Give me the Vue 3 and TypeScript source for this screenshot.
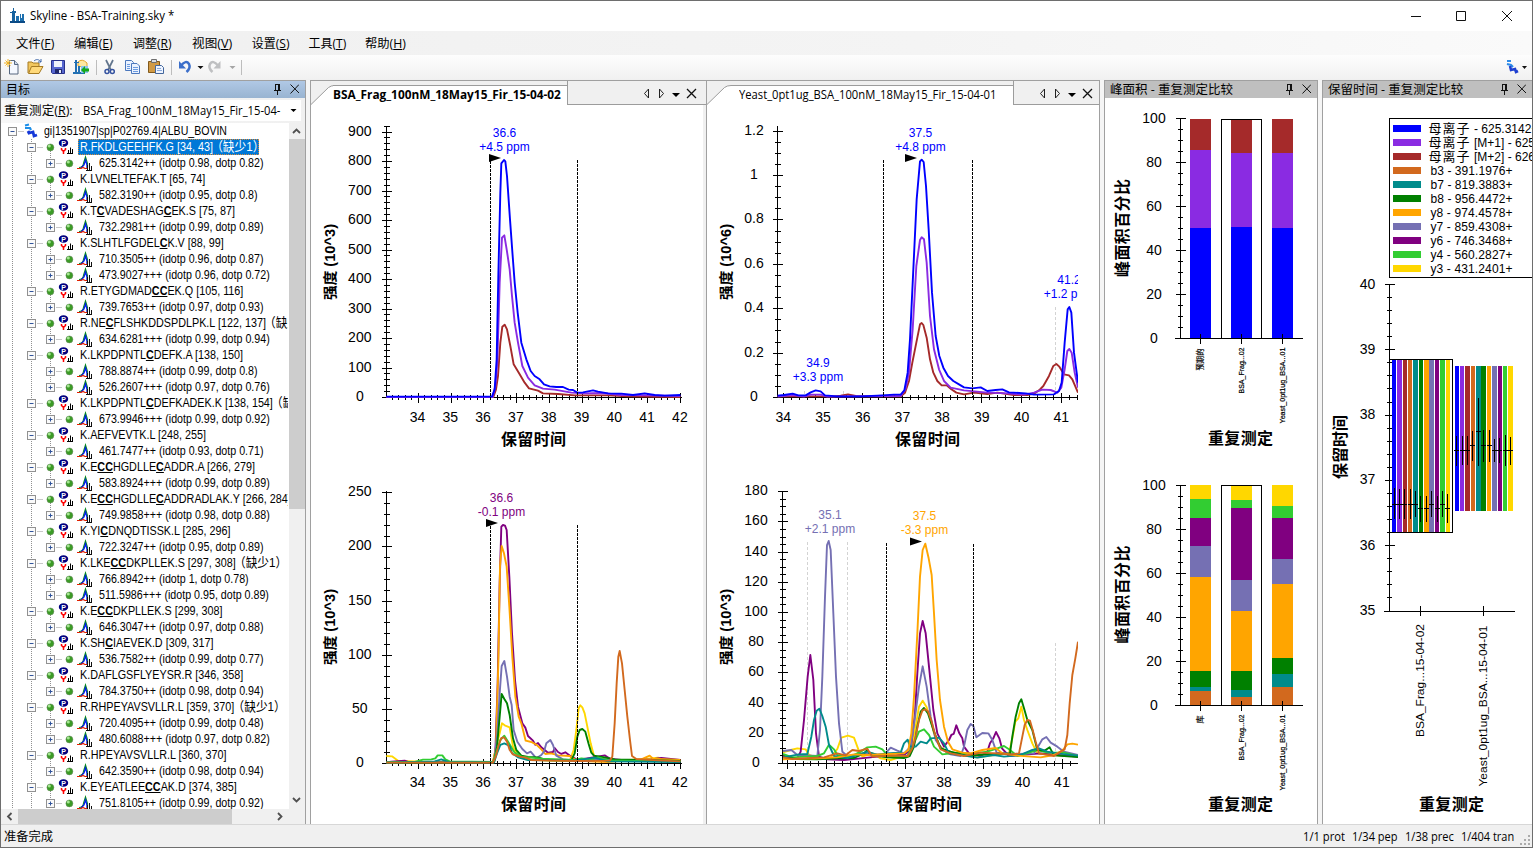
<script setup lang="ts">
type Span = [number, number]

interface TreeRow { level: 0 | 1 | 2; text: string; missed?: boolean; selected?: boolean }
interface Curve { color: string; d: string }
interface Note { x: number; y: number; color: string; top: string; bottom: string }
interface Plot {
  ox: number; oy: number
  axisX: number; axisTop: number; base: number
  yStep: number; yLabels: string[]; yLabelX: number; yMinor: number
  xFirst: number; xStep: number; xLabels: string[]; xEnd: number; labelShift: number
  unit: string; unitX: number; unitTop: number; titleX: number
  solid: number[][]; faint: number[][]
  arrow: Span; notes: Note[]; curves: Curve[]
}

/* Squeezes or stretches a run of text to a given width. */
const vFit = {
  mounted(el: HTMLElement, binding: { value: number }) {
    const natural = el.offsetWidth
    el.style.transform = `scaleX(${binding.value / natural})`
    el.style.marginRight = `${binding.value - natural}px`
  },
}

const C = {
  blue: '#0000ff', violet: '#8a2be2', brown: '#a52a2a', choc: '#d2691e', teal: '#008b8b',
  green: '#008000', orange: '#ffa500', slate: '#7570b3', purple: '#800080', lime: '#32cd32', gold: '#ffd700',
}
const palette = [C.blue, C.violet, C.brown, C.choc, C.teal, C.green, C.orange, C.slate, C.purple, C.lime, C.gold]

const menus = [
  { t: '文件', k: 'F', w: 38, gap: 20 }, { t: '编辑', k: 'E', w: 39, gap: 20 }, { t: '调整', k: 'R', w: 39, gap: 20 },
  { t: '视图', k: 'V', w: 40, gap: 20 }, { t: '设置', k: 'S', w: 38, gap: 19 }, { t: '工具', k: 'T', w: 38, gap: 19 },
  { t: '帮助', k: 'H', w: 41, gap: 0 },
]

const p = (text: string, missed = false, selected = false): TreeRow => ({ level: 1, text, missed, selected })
const c = (text: string): TreeRow => ({ level: 2, text })
const rows: TreeRow[] = [
  { level: 0, text: 'gi|1351907|sp|P02769.4|ALBU_BOVIN' },
  p('R.FKDLGEEHFK.G [34, 43]', true, true), c('625.3142++ (idotp 0.98, dotp 0.82)'),
  p('K.LVNELTEFAK.T [65, 74]'), c('582.3190++ (idotp 0.95, dotp 0.8)'),
  p('K.T*C*VADESHAG*C*EK.S [75, 87]'), c('732.2981++ (idotp 0.99, dotp 0.89)'),
  p('K.SLHTLFGDEL*C*K.V [88, 99]'), c('710.3505++ (idotp 0.96, dotp 0.87)'), c('473.9027+++ (idotp 0.96, dotp 0.72)'),
  p('R.ETYGDMAD*CC*EK.Q [105, 116]'), c('739.7653++ (idotp 0.97, dotp 0.93)'),
  p('R.NE*C*FLSHKDDSPDLPK.L [122, 137]', true), c('634.6281+++ (idotp 0.99, dotp 0.94)'),
  p('K.LKPDPNTL*C*DEFK.A [138, 150]'), c('788.8874++ (idotp 0.99, dotp 0.8)'), c('526.2607+++ (idotp 0.97, dotp 0.76)'),
  p('K.LKPDPNTL*C*DEFKADEK.K [138, 154]', true), c('673.9946+++ (idotp 0.99, dotp 0.92)'),
  p('K.AEFVEVTK.L [248, 255]'), c('461.7477++ (idotp 0.93, dotp 0.71)'),
  p('K.E*CC*HGDLLE*C*ADDR.A [266, 279]'), c('583.8924+++ (idotp 0.99, dotp 0.89)'),
  p('K.E*CC*HGDLLE*C*ADDRADLAK.Y [266, 284]'), c('749.9858+++ (idotp 0.98, dotp 0.88)'),
  p('K.YI*C*DNQDTISSK.L [285, 296]'), c('722.3247++ (idotp 0.95, dotp 0.89)'),
  p('K.LKE*CC*DKPLLEK.S [297, 308]', true), c('766.8942++ (idotp 1, dotp 0.78)'), c('511.5986+++ (idotp 0.95, dotp 0.89)'),
  p('K.E*CC*DKPLLEK.S [299, 308]'), c('646.3047++ (idotp 0.97, dotp 0.88)'),
  p('K.SH*C*IAEVEK.D [309, 317]'), c('536.7582++ (idotp 0.99, dotp 0.77)'),
  p('K.DAFLGSFLYEYSR.R [346, 358]'), c('784.3750++ (idotp 0.98, dotp 0.94)'),
  p('R.RHPEYAVSVLLR.L [359, 370]', true), c('720.4095++ (idotp 0.99, dotp 0.48)'), c('480.6088+++ (idotp 0.97, dotp 0.82)'),
  p('R.HPEYAVSVLLR.L [360, 370]'), c('642.3590++ (idotp 0.98, dotp 0.94)'),
  p('K.EYEATLEE*CC*AK.D [374, 385]'), c('751.8105++ (idotp 0.99, dotp 0.92)'),
]
const gutter = (level: number) => [42, 78, 97][level]
const boxX = (level: number) => [8.5, 27.5, 46.5][level]
const parts = (text: string) => text.split('*').map((t, i) => ({ t, strong: i % 2 === 1 }))
const branchEnd = (i: number) => (rows[i + 1] && rows[i + 1].level === 2 ? 16 : 4)

/* Curves are listed in thirds of a pixel, measured from each plot's own origin. */
const plots: Plot[] = [
  {
    ox: 308, oy: 76, axisX: 386.5, axisTop: 126, base: 397.5,
    yStep: 29.5, yLabels: ['0', '100', '200', '300', '400', '500', '600', '700', '800', '900'], yLabelX: 359.8, yMinor: 5,
    xFirst: 418.3, xStep: 32.8, xLabels: ['34', '35', '36', '37', '38', '39', '40', '41', '42'], xEnd: 682, labelShift: -0.8,
    unit: '强度 (10^3)', unitX: 334.5, unitTop: 224, titleX: 501,
    solid: [[490.5, 161], [577.5, 160]], faint: [], arrow: [489, 158],
    notes: [{ x: 504.5, y: 137, color: C.blue, top: '36.6', bottom: '+4.5 ppm' }],
    curves: [
      { color: C.brown, d: '235,963 556,963 564,940 570,900 577,800 583,752 590,746 597,760 607,810 617,865 635,895 650,920 663,937 690,944 705,952 750,954 800,958 900,958 960,961 1117,963' },
      { color: C.violet, d: '235,963 554,963 562,930 568,860 575,620 582,485 589,478 596,520 605,580 612,660 620,740 630,800 643,870 660,905 680,928 705,938 740,941 790,950 830,952 880,951 940,957 1020,958 1117,960' },
      { color: C.blue, d: '235,962 552,962 560,940 566,850 571,600 577,350 580,262 588,252 592,256 597,300 606,430 614,540 620,620 629,710 640,800 655,850 668,885 680,900 695,910 708,925 725,931 745,933 765,933 782,941 795,942 808,950 825,949 855,943 870,947 900,952 940,953 975,957 1010,952 1040,957 1070,959 1117,957' },
    ],
  },
  {
    ox: 704, oy: 76, axisX: 777.5, axisTop: 126, base: 397.5,
    yStep: 44.4, yLabels: ['0', '0.2', '0.4', '0.6', '0.8', '1', '1.2'], yLabelX: 754, yMinor: 4,
    xFirst: 783.3, xStep: 39.7, xLabels: ['34', '35', '36', '37', '38', '39', '40', '41'], xEnd: 1078, labelShift: 0,
    unit: '强度 (10^6)', unitX: 730.5, unitTop: 224, titleX: 895,
    solid: [[883.5, 160], [972.5, 160]], faint: [[804.5, 391], [843.5, 391], [1055.5, 307]], arrow: [905, 158],
    notes: [
      { x: 920.5, y: 137, color: C.blue, top: '37.5', bottom: '+4.8 ppm' },
      { x: 818, y: 367, color: C.blue, top: '34.9', bottom: '+3.3 ppm' },
      { x: 1069, y: 284, color: C.blue, top: '41.2', bottom: '+1.2 ppm' },
    ],
    curves: [
      { color: C.brown, d: '221,961 390,961 410,959 432,955 455,960 590,961 603,950 615,915 625,860 637,800 648,745 653,741 658,747 668,785 678,850 688,890 700,915 713,928 728,928 742,940 757,950 780,955 810,950 850,954 880,950 930,957 970,957 990,953 1005,943 1018,930 1035,900 1048,870 1057,864 1066,872 1080,895 1095,898 1105,910 1122,950' },
      { color: C.violet, d: '221,962 265,957 300,962 320,956 350,956 370,962 590,960 604,940 615,890 626,760 637,570 648,492 653,484 660,490 668,560 678,720 690,820 705,880 720,915 740,935 780,943 850,950 910,952 960,956 990,950 1015,941 1040,942 1060,950 1072,935 1082,880 1090,825 1096,819 1103,830 1112,890 1122,935' },
      { color: C.blue, d: '221,959 240,957 266,953 283,958 305,958 320,949 335,943 350,946 363,958 400,961 470,961 520,959 570,956 590,956 601,943 611,890 618,790 628,580 638,370 648,256 653,251 659,258 666,330 674,460 684,650 695,780 706,840 718,875 732,900 748,915 765,925 780,934 805,937 830,934 850,945 875,942 895,940 915,949 965,952 990,956 1050,955 1065,945 1073,920 1082,800 1091,700 1096,693 1102,710 1110,830 1122,920' },
    ],
  },
  {
    ox: 308, oy: 470, axisX: 386.5, axisTop: 491, base: 763.5,
    yStep: 54.15, yLabels: ['0', '50', '100', '150', '200', '250'], yLabelX: 359.8, yMinor: 5,
    xFirst: 418.3, xStep: 32.8, xLabels: ['34', '35', '36', '37', '38', '39', '40', '41', '42'], xEnd: 682, labelShift: -0.8,
    unit: '强度 (10^3)', unitX: 334.5, unitTop: 589, titleX: 501,
    solid: [[490.5, 526], [577.5, 525]], faint: [], arrow: [486, 523],
    notes: [{ x: 501.5, y: 502, color: C.purple, top: '36.6', bottom: '-0.1 ppm' }],
    curves: [
      { color: C.gold, d: '235,858 252,859 270,872 350,876 555,876 567,820 575,790 582,760 590,766 605,772 615,830 630,858 655,868 720,872 785,873 797,840 805,780 812,715 817,706 823,712 830,730 838,770 848,820 858,858 875,867 960,872 1050,863 1075,870 1117,872' },
      { color: C.purple, d: '235,877 250,875 290,872 300,876 555,877 562,850 569,640 575,340 580,170 585,165 591,167 596,180 604,320 612,490 621,630 630,710 643,760 652,773 660,798 675,812 682,824 690,819 700,832 720,848 735,846 740,834 750,846 760,852 772,847 790,860 810,870 855,862 890,856 905,866 960,872 1030,868 1060,864 1117,870' },
      { color: C.orange, d: '235,877 555,877 564,830 571,580 576,290 581,228 588,250 596,290 604,410 613,560 622,680 632,740 640,760 653,812 670,816 685,824 700,838 712,852 730,850 750,856 785,858 800,868 840,874 900,876 960,870 1000,868 1025,857 1035,866 1117,870' },
      { color: C.slate, d: '235,877 558,877 568,790 575,670 581,588 589,573 597,620 605,680 611,705 617,780 628,815 643,837 657,850 668,845 685,865 700,855 708,845 715,820 727,810 735,825 745,857 765,868 795,871 840,873 880,865 920,872 1117,874' },
      { color: C.green, d: '235,878 558,877 567,830 575,740 581,672 589,687 597,700 605,735 615,805 625,840 640,857 660,861 690,862 715,870 790,871 800,850 808,800 815,780 823,777 832,785 842,822 850,848 858,857 890,862 920,868 1000,870 1117,873' },
      { color: C.lime, d: '235,877 320,876 345,869 370,868 382,865 389,856 403,856 412,868 425,874 556,876 567,840 577,810 589,797 603,820 620,848 640,860 700,866 800,870 820,865 850,868 870,862 900,871 1117,875' },
      { color: C.teal, d: '235,878 340,876 380,874 400,868 420,876 558,877 567,850 577,825 589,820 605,828 612,850 630,862 660,870 800,872 860,863 900,874 1117,876' },
      { color: C.choc, d: '235,878 555,878 563,860 572,825 580,804 588,802 597,815 605,840 615,853 635,860 653,863 670,870 700,871 810,873 905,872 913,860 920,760 926,640 931,560 935,543 942,580 950,660 958,740 966,810 972,858 985,867 1050,871 1117,874' },
    ],
  },
  {
    ox: 704, oy: 470, axisX: 782.5, axisTop: 491, base: 763.5,
    yStep: 30.2, yLabels: ['0', '20', '40', '60', '80', '100', '120', '140', '160', '180'], yLabelX: 756, yMinor: 4,
    xFirst: 787.3, xStep: 39.3, xLabels: ['34', '35', '36', '37', '38', '39', '40', '41'], xEnd: 1078, labelShift: -0.5,
    unit: '强度 (10^3)', unitX: 730.5, unitTop: 589, titleX: 897,
    solid: [[886.5, 543], [973.5, 544]], faint: [[807.5, 542], [847.5, 542], [1055.5, 643]], arrow: [910, 541.5],
    notes: [
      { x: 830, y: 519, color: C.slate, top: '35.1', bottom: '+2.1 ppm' },
      { x: 924.5, y: 520, color: C.orange, top: '37.5', bottom: '-3.3 ppm' },
    ],
    curves: [
      { color: C.gold, d: '237,847 260,840 280,835 305,838 315,855 345,865 380,863 400,837 412,803 432,797 450,803 463,838 475,860 505,850 530,865 560,870 585,862 612,860 625,820 635,770 645,710 656,692 668,712 680,750 690,790 705,825 730,850 780,855 820,862 870,855 915,850 925,805 934,755 943,745 952,710 960,750 970,780 985,820 1000,850 1050,855 1122,858' },
      { color: C.purple, d: '237,858 280,865 290,845 300,750 311,620 319,555 328,630 336,790 345,860 370,868 420,870 470,865 520,860 570,850 600,855 620,840 633,730 640,610 648,490 656,453 665,490 675,590 688,720 700,790 720,830 735,810 742,795 749,792 757,766 766,790 775,805 780,830 795,850 830,858 850,845 858,820 868,805 876,786 886,805 894,835 915,858 1010,850 1060,855 1122,860' },
      { color: C.slate, d: '237,843 262,840 280,855 340,858 348,780 355,620 363,380 369,225 374,213 380,240 388,430 396,620 405,760 415,845 430,858 480,850 540,855 560,833 580,842 600,850 620,830 632,750 645,650 656,589 668,650 680,740 695,810 715,838 740,853 770,858 780,830 790,780 800,762 808,768 817,802 835,789 853,790 865,810 878,848 940,852 990,850 1005,825 1015,808 1027,801 1040,818 1060,830 1080,845 1122,855' },
      { color: C.lime, d: '237,852 265,862 340,858 360,850 375,824 390,838 400,855 440,860 470,845 490,832 515,830 535,838 555,860 610,858 630,820 645,785 660,778 675,795 690,830 715,853 760,848 800,852 850,845 880,835 900,828 915,838 940,858 1000,840 1030,848 1080,848 1122,858' },
      { color: C.green, d: '237,862 280,867 340,868 400,865 450,864 480,850 490,840 500,855 550,862 600,864 617,858 630,830 640,770 650,725 660,714 672,730 690,785 710,835 740,845 790,858 860,852 918,850 925,800 935,740 945,700 952,688 960,715 970,750 985,780 1000,840 1022,842 1037,832 1050,856 1122,861' },
      { color: C.teal, d: '237,862 285,853 310,852 322,800 330,750 338,722 346,716 355,738 365,770 375,825 390,858 430,864 470,852 490,845 520,855 545,850 590,848 600,820 611,809 618,830 635,830 650,815 668,820 680,805 705,803 720,820 735,850 770,855 820,863 870,855 900,860 950,855 985,840 1005,835 1030,845 1060,850 1122,857' },
      { color: C.orange, d: '237,868 280,866 330,866 400,862 450,853 490,855 560,852 600,850 613,840 622,790 630,680 640,490 648,320 656,240 664,221 674,265 683,315 690,430 698,570 708,690 720,770 732,815 745,838 775,848 800,850 835,840 875,834 895,850 940,857 1010,862 1050,855 1075,842 1090,823 1105,821 1122,824' },
      { color: C.choc, d: '237,862 265,867 320,864 360,862 400,850 425,856 445,840 465,843 490,836 505,860 560,857 612,858 625,835 635,800 645,750 655,722 663,718 672,724 683,755 695,800 710,838 740,850 780,858 830,848 880,850 920,854 945,850 955,800 962,765 970,750 978,752 986,780 995,815 1005,850 1050,858 1070,845 1082,838 1090,795 1097,700 1105,615 1114,565 1122,515' },
    ],
  },
]
const panes = [
  { left: 311, plots: [plots[0], plots[2]], tab: 'BSA_Frag_100nM_18May15_Fir_15-04-02', w: 228, bold: true },
  { left: 707, plots: [plots[1], plots[3]], tab: 'Yeast_0pt1ug_BSA_100nM_18May15_Fir_15-04-01', w: 257, bold: false },
]

function axisPath(g: Plot): string {
  let d = `M${g.axisX} ${g.axisTop}V${g.base}M${g.axisX - 4} ${g.base}H${g.xEnd}`
  const sub = g.yStep / g.yMinor
  for (let i = 0, y = g.base; y >= g.axisTop; i++, y = g.base - i * sub) {
    const r = i % g.yMinor === 0 ? 5 : 3
    d += `M${g.axisX - r} ${Math.floor(y) + 0.5}h${2 * r}`
  }
  const step = g.xStep / 5
  for (let i = -4; i <= (g.xLabels.length - 1) * 5 + 4; i++) {
    const x = g.xFirst + i * step
    if (x < g.axisX || x > g.xEnd) continue
    const r = i % 5 === 0 ? 5 : 2.5
    d += `M${Math.floor(x) + 0.5} ${g.base - r}v${2 * r}`
  }
  return d
}

const areaTitleY = [277, 643.5]
const stacks = [
  {
    top: 118.5, oy: 76, first: '预期的', firstLen: 22,
    bars: [[128, 221, 456, 787], [130, 231, 453, 787], [128, 231, 456, 787]],
    colors: [C.brown, C.violet, C.blue],
  },
  {
    top: 485.5, oy: 470, first: '库', firstLen: 8,
    bars: [[45, 87, 144, 228, 321, 603, 651, 663, 706], [48, 90, 114, 330, 423, 603, 660, 681, 706], [45, 108, 144, 267, 342, 564, 612, 651, 706]],
    colors: [C.gold, C.lime, C.purple, C.slate, C.orange, C.green, C.teal, C.choc],
  },
]
const barX = [1190, 1231, 1272]
function stackAxis(top: number): string {
  let d = `M1180.5 ${top}v220M1175 ${top + 220}h128`
  for (let i = 0; i <= 20; i++) {
    const r = i % 4 === 0 ? 5 : 2.5
    d += `M${1180.5 - r} ${top + i * 11}h${2 * r}`
  }
  for (const x of [1200.5, 1241.5, 1282.5]) d += `M${x} ${top + 215}v10`
  return d
}

const rtBars: { y: Span; x: Span[]; mid: number[]; range: Span[]; tick: number[] }[] = [
  {
    y: [238, 757],
    x: [[222, 234], [237, 252], [255, 267], [270, 282], [285, 300], [303, 315], [318, 333], [333, 348], [351, 363], [366, 381], [384, 396]],
    mid: [229, 244, 260, 278, 292, 307, 325, 340, 358, 374, 388],
    range: [[624, 718], [627, 717], [627, 717], [627, 717], [633, 711], [648, 726], [648, 726], [633, 711], [648, 726], [633, 711], [642, 729]],
    tick: [673, 673, 673, 673, 673, 685, 685, 673, 685, 673, 685],
  },
  {
    y: [258, 693],
    x: [[411, 423], [426, 438], [441, 456], [459, 471], [474, 489], [489, 504], [507, 519], [522, 537], [540, 552], [555, 567], [570, 585]],
    mid: [416, 433, 448, 463, 481, 496, 514, 529, 544, 562, 577],
    range: [[468, 558], [468, 555], [468, 555], [453, 543], [354, 558], [450, 546], [450, 546], [477, 546], [474, 549], [465, 558], [471, 555]],
    tick: [511, 511, 511, 496, 454, 496, 496, 511, 511, 511, 511],
  },
]
const snap = (v: number) => Math.floor(v / 3) + 0.5
const whisker = (g: (typeof rtBars)[number], i: number) =>
  `M${1318 + snap(g.mid[i])} ${280 + g.range[i][0] / 3}V${280 + g.range[i][1] / 3}M${1318 + snap(g.mid[i]) - 2.5} ${280 + snap(g.tick[i])}h5`
let rtAxis = 'M1389.5 284V611.5M1384 611.5H1515M1420.5 606v10M1483.5 606v10'
for (let i = 0; i <= 25; i++) {
  const r = i % 5 === 0 ? 5 : 2.5
  rtAxis += `M${1389.5 - r} ${Math.round(284 + i * 13.06) + 0.5}h${2 * r}`
}
const legend = [
  { pre: '母离子', t: '- 625.3142++' }, { pre: '母离子', t: '[M+1] - 625.8159++' }, { pre: '母离子', t: '[M+2] - 626.3173++' },
  { t: 'b3 - 391.1976+' }, { t: 'b7 - 819.3883+' }, { t: 'b8 - 956.4472+' }, { t: 'y8 - 974.4578+' },
  { t: 'y7 - 859.4308+' }, { t: 'y6 - 746.3468+' }, { t: 'y4 - 560.2827+' }, { t: 'y3 - 431.2401+' },
]
const counts = [{ t: '1/1 prot', w: 42 }, { t: '1/34 pep', w: 46 }, { t: '1/38 prec', w: 49 }, { t: '1/404 tran', w: 53 }]
</script>

<template>
  <div class="window">
    <header class="titlebar">
      <svg class="logo" width="17" height="16" viewBox="0 0 17 16">
        <path d="M1 13h15v2H1z" fill="#0b4a86" />
        <path d="M4 0h1v3h2v2H6v8H3V5H1V4h2V3h1z" fill="#17629e" />
        <path d="M7 8h3v5H7zM11 6h1v4h1V6h2v7h-4z" fill="#1d6fae" />
      </svg>
      <span v-fit="144" class="fit">Skyline - BSA-Training.sky *</span>
      <svg class="caption" width="120" height="30" viewBox="1412 1 120 30">
        <path d="M1413 16.500h10M1458.500 11.500h9v9h-9zM1504 11l10 10M1514 11l-10 10" fill="none" stroke="#111" />
      </svg>
    </header>

    <nav class="menubar">
      <span v-for="m in menus" :key="m.k" class="menu" :style="{ marginRight: m.gap + 'px' }">
        <span v-fit="m.w" class="fit">{{ m.t }}(<u>{{ m.k }}</u>)</span>
      </span>
    </nav>

    <div class="toolbar">
      <svg width="242" height="24" viewBox="0 55 242 24" class="tools">
        <!-- new -->
        <path d="M9.500 60.500h5l3.500 4v9.500h-8.500z" fill="#f4f8ff" stroke="#56677f" /><path d="M14.500 60.500v4h3.500" fill="#cbd9ea" stroke="#56677f" />
        <path d="M8 59v8M4 63h8M5.500 60.500l5 5M10.500 60.500l-5 5" stroke="#f0b428" />
        <!-- open -->
        <path d="M28 73V62h4l1 1h6v3" fill="#f2c75e" stroke="#a57a22" /><path d="M28.500 73.500l3-7h11.500l-4 7z" fill="#ffd97a" stroke="#a57a22" />
        <path d="M34 61c2-2 5-2 7 1m0-3v3h-3" fill="none" stroke="#3c66a8" />
        <!-- save -->
        <path d="M51.500 60.500h13v13h-12l-1-1z" fill="#5666d0" stroke="#28318a" /><path d="M54 61h8v6h-8z" fill="#eef2fb" /><path d="M55 69h7v4h-7z" fill="#20286a" /><path d="M59 70h2v3h-2z" fill="#e4e9f8" />
        <!-- import -->
        <path d="M78 66v-4q4-4 9 1v5z" fill="#ffe8a0" stroke="#e2a52c" /><path d="M73 72h12v2H73zM75 60h2v12h-2zM74 62h5v1h-5zM78 66h2v7h-2z" fill="#2370b3" /><path d="M81 66h7v7h-7z" fill="#8cc3ee" />
        <path d="M81 70l4-4v2.500h4v3h-4V74z" fill="#14a818" />
        <path d="M96.500 60v15M171.500 60v15M241.500 60v15" stroke="#bdbdbd" />
        <!-- cut -->
        <path d="M106 60l5 10M113 60l-5 10" stroke="#62758d" stroke-width="1.700" /><g fill="none" stroke="#3553a0" stroke-width="1.500"><circle cx="107" cy="71.500" r="2" /><circle cx="112.300" cy="71.500" r="2" /></g>
        <!-- copy -->
        <g fill="#eaf2ff" stroke="#4c78bd"><path d="M125.500 60.500h6l2 2v8h-8z" /><path d="M131.500 63.500h5.500l2.500 2.500v7.500h-8z" /></g><path d="M127 64.500h3M127 66.500h3M127 68.500h3M133 67.500h5M133 69.500h5M133 71.500h5" stroke="#6c9be0" />
        <!-- paste -->
        <path d="M148.500 61.500h11v11h-11z" fill="#d19a45" stroke="#825a1d" /><path d="M151.500 59.500h5v3h-5z" fill="#dadfe6" stroke="#6e6e6e" /><path d="M155.500 65.500h6l2 2v6h-8z" fill="#eef4ff" stroke="#44679c" /><path d="M157 68.500h4M157 70.500h5" stroke="#88a9dc" />
        <!-- undo / redo -->
        <path d="M181 65.500q5-6 8-1.500q2 4-2.500 8" fill="none" stroke="#3c6fca" stroke-width="2.500" /><path d="M179 61v7.500h7z" fill="#3c6fca" />
        <path d="M197.500 66h6l-3 3z" fill="#111" />
        <path d="M218 65.500q-5-6-8-1.500q-2 4 2.500 8" fill="none" stroke="#bfc0c2" stroke-width="2.500" /><path d="M220.500 61v7.500h-7z" fill="#bfc0c2" />
        <path d="M229.500 66h6l-3 3z" fill="#a5a5a5" />
      </svg>
      <svg class="tool-right" width="28" height="24" viewBox="1504 55 28 24">
        <path d="M1507 61l4 0M1507 64l4 1 2 2" fill="none" stroke="#2d8be8" stroke-width="2.200" /><path d="M1510 66l1 4 4-1 1 3 2-1" fill="none" stroke="#1d3fd0" stroke-width="2.600" />
        <path d="M1522 66h5l-2.500 3z" fill="#111" />
      </svg>
    </div>

    <main class="dock">
      <section class="panel targets">
        <div class="head active"><span>目标</span>
          <svg class="pin" width="27" height="14" viewBox="0 0 27 14"><path d="M3 2.500h5M3.500 2v6M6.500 2v6M7.500 2v6M2 8.500h7M5.500 9v4M18.500 2.500l9 9M27 2.500l-8.500 9" fill="none" stroke="#111" /></svg>
        </div>
        <div class="replicate">
          <span v-fit="69" class="fit cap">重复测定(<u>R</u>):</span>
          <div class="combo"><span v-fit="197" class="fit">BSA_Frag_100nM_18May15_Fir_15-04-</span><svg width="7" height="4"><path d="M.5 0h6l-3 3z" /></svg></div>
        </div>
        <div class="tree-area">
          <div class="tree">
            <div v-for="(r, i) in rows" :key="i" class="row">
              <svg :width="gutter(r.level)" height="16" class="gutter">
                <g stroke="#909090" stroke-dasharray="1 1">
                  <path :d="i ? 'M12.500 0v16' : 'M12.500 12v4'" />
                  <path v-if="r.level" d="M31.500 0v16" />
                  <path v-if="r.level === 2" :d="`M50.500 0v${branchEnd(i)}`" />
                  <path v-if="r.level === 1" d="M50.500 12v4" />
                  <path :d="`M${boxX(r.level) + 10} 8.500h5`" />
                </g>
                <rect :x="boxX(r.level)" y="4.500" width="8" height="8" fill="#fafafa" stroke="#919191" />
                <path :d="`M${boxX(r.level) + 2} 8.500h4` + (r.level === 2 ? 'm-2 -2v4' : '')" stroke="#31549b" />
                <g v-if="r.level === 0"><path d="M25 2.500l4-1M25 5l5 0 1 2" fill="none" stroke="#1c8ee8" stroke-width="2.200" /><path d="M28 8l1 2 4-1 1 4 3-1" fill="none" stroke="#1538d8" stroke-width="2.800" /></g>
                <g v-else :transform="`translate(${r.level === 2 ? 19 : 0} 0)`">
                  <circle cx="50.400" cy="8.400" r="3.500" fill="#3b9b25" stroke="#6c8767" stroke-width=".5" /><circle cx="49.300" cy="7" r="1.500" fill="#a5e692" />
                </g>
                <g v-if="r.level === 1">
                  <ellipse cx="63.500" cy="4" rx="4.700" ry="3.800" fill="#000080" /><text x="61.300" y="6.700" class="tiny">P</text>
                  <path d="M61.500 9v1.500l2 2V15M65.500 9v1.500l-2 2" fill="none" stroke="#ff0000" stroke-width="1.500" />
                  <path d="M67 14.500h6M68.500 11v3M70.500 8.500v6M72.500 10v5" stroke="#000" />
                </g>
                <g v-if="r.level === 2" fill="none">
                  <path d="M79 12.500q4 0 4.500-4l2-6.500 2 6.500v4" stroke="#0a8a20" stroke-width="1.200" /><path d="M81 13l3-3 1.500-5 1.500 5v3" stroke="#0018f0" stroke-width="1.300" /><path d="M77 13.500h4l2-1 2 1h2" stroke="#e02000" stroke-width="1.200" />
                  <path d="M86 15.500h6M87.500 10v5M89.500 8v7M91.500 11v5" stroke="#111" />
                </g>
              </svg>
              <span class="label" :class="{ selected: r.selected }"><span class="latin" :class="'l' + r.level"><template v-for="(s, j) in parts(r.text)" :key="j"><b v-if="s.strong">{{ s.t }}</b><template v-else>{{ s.t }}</template></template><span v-if="r.missed" class="missed">（缺少1）</span></span></span>
            </div>
          </div>
          <div class="vbar"><svg width="15" height="16"><path d="M4 10l3.500-3.500L11 10" /></svg><i></i><svg width="15" height="16"><path d="M4 5l3.500 3.500L11 5" /></svg></div>
        </div>
        <div class="hbar"><svg width="17" height="16"><path d="M10.500 4L7 7.500l3.500 3.500" /></svg><i></i><svg width="17" height="16"><path d="M6 4l3.500 3.500L6 11" /></svg></div>
      </section>

      <section v-for="(pane, k) in panes" :key="pane.left" class="docpane" :class="{ second: k === 1 }">
        <div class="tabs">
          <svg class="slope" width="24" height="24"><path d="M0 24L15.500 8.500Q20 4.500 24 4.500V24z" fill="#fff" /><path d="M0 23.500L17.500 6.500Q20 4.500 24 4.500" fill="none" stroke="#9c9c9c" /></svg>
          <div class="tab" :class="{ bold: pane.bold }"><span v-fit="pane.w" class="fit">{{ pane.tab }}</span></div>
          <div class="tabfill"><svg width="60" height="23" viewBox="640 81 60 23">
            <path d="M648.500 89l-4 4.500 4 4.500zM659.500 89l4 4.500-4 4.500z" fill="none" stroke="#222" /><path d="M672 93h8l-4 4z" /><path d="M687 89l9 9M696 89l-9 9" stroke="#111" stroke-width="1.300" />
          </svg></div>
        </div>
        <svg class="canvas" width="392" height="720" :viewBox="`${pane.left} 105 392 720`">
          <defs><clipPath :id="'area' + k"><rect :x="pane.left" y="105" :width="k ? 371 : 392" height="720" /></clipPath></defs>
          <g v-for="(g, n) in pane.plots" :key="n" :clip-path="`url(#area${k})`">
            <path :d="axisPath(g)" class="axis" />
            <path v-for="s in g.faint" :key="s[0]" :d="`M${s[0]} ${s[1]}V${g.base - 1}`" class="bound faint" />
            <g :transform="`translate(${g.ox} ${g.oy}) scale(.33333)`">
              <polyline v-for="(cv, m) in g.curves" :key="m" :points="cv.d" :stroke="cv.color" class="curve" />
            </g>
            <path v-for="s in g.solid" :key="s[0]" :d="`M${s[0]} ${s[1]}V${g.base}`" class="bound" />
            <path :d="`M${g.arrow[0]} ${g.arrow[1] - 4}l12 4l-12 4z`" />
            <text v-for="(t, m) in g.yLabels" :key="'y' + t" :x="g.yLabelX" :y="Math.floor(g.base - m * g.yStep) + 4" class="num">{{ t }}</text>
            <text v-for="(t, m) in g.xLabels" :key="'x' + t" :x="g.xFirst + m * g.xStep + g.labelShift" :y="g.base + (n ? 23.500 : 24.500)" class="num">{{ t }}</text>
            <g v-for="o in g.notes" :key="o.x" :fill="o.color" class="note"><text :x="o.x" :y="o.y">{{ o.top }}</text><text :x="o.x" :y="o.y + 14">{{ o.bottom }}</text></g>
            <text :transform="`translate(${g.unitX} ${g.unitTop + 76}) rotate(-90)`" textLength="76" lengthAdjust="spacingAndGlyphs" class="unit">{{ g.unit }}</text>
            <text :x="g.titleX" :y="g.base + (n ? 46.500 : 47.500)" textLength="65" class="axis-title">保留时间</text>
          </g>
        </svg>
      </section>

      <section class="panel areas">
        <div class="head"><span v-fit="123" class="fit">峰面积 - 重复测定比较</span>
          <svg class="pin" width="27" height="14" viewBox="0 0 27 14"><path d="M3 2.500h5M3.500 2v6M6.500 2v6M7.500 2v6M2 8.500h7M5.500 9v4M18.500 2.500l9 9M27 2.500l-8.500 9" fill="none" stroke="#111" /></svg>
        </div>
        <svg class="canvas" width="212" height="727" viewBox="1105 98 212 727">
          <g v-for="(s, k) in stacks" :key="k">
            <g v-for="(b, i) in s.bars" :key="i">
              <rect v-for="(col, j) in s.colors" :key="j" :x="barX[i]" :y="s.oy + b[j] / 3" width="21" :height="(b[j + 1] - b[j]) / 3" :fill="col" shape-rendering="crispEdges" />
            </g>
            <path :d="stackAxis(s.top)" class="axis" />
            <path :d="`M1221.500 ${s.top + 220}V${s.top + 1 - k}h40V${s.top + 220}`" class="axis" />
            <text v-for="n in 6" :key="n" x="1154" :y="s.top + 4 + (n - 1) * 44" class="num">{{ 120 - n * 20 }}</text>
            <text :transform="`translate(1203 ${s.top + 230 + s.firstLen}) rotate(-90)`" class="mini" :textLength="s.firstLen" lengthAdjust="spacingAndGlyphs">{{ s.first }}</text>
            <text :transform="`translate(1243.500 ${s.top + 275}) rotate(-90)`" class="mini" textLength="46" lengthAdjust="spacingAndGlyphs">BSA_Frag...02</text>
            <text :transform="`translate(1284.500 ${s.top + 305}) rotate(-90)`" class="mini" textLength="76" lengthAdjust="spacingAndGlyphs">Yeast_0pt1ug_BSA...01</text>
            <text :transform="`translate(1128 ${areaTitleY[k]}) rotate(-90)`" textLength="98" class="axis-title">峰面积百分比</text>
            <text x="1208" :y="s.top + 325 - k" textLength="65" class="axis-title">重复测定</text>
          </g>
        </svg>
      </section>

      <section class="panel times">
        <div class="head"><span v-fit="135" class="fit">保留时间 - 重复测定比较</span>
          <svg class="pin" width="27" height="14" viewBox="0 0 27 14"><path d="M3 2.500h5M3.500 2v6M6.500 2v6M7.500 2v6M2 8.500h7M5.500 9v4M18.500 2.500l9 9M27 2.500l-8.500 9" fill="none" stroke="#111" /></svg>
        </div>
        <svg class="canvas" width="209" height="727" viewBox="1323 98 209 727">
          <path d="M1533 118.500h-143.500v159H1533" class="axis" />
          <g v-for="(l, i) in legend" :key="i">
            <rect x="1393" :y="125 + 14 * i" width="28" height="7" :fill="palette[i]" />
            <text v-if="l.pre" x="1428.500" :y="132.500 + 14 * i" class="key" font-size="13" textLength="41">{{ l.pre }}</text>
            <text :x="l.pre ? 1474 : 1430.500" :y="132.500 + 14 * i" class="key" :textLength="l.pre ? undefined : 82">{{ l.t }}</text>
          </g>
          <path :d="rtAxis" class="axis" />
          <text v-for="n in 6" :key="n" x="1367.500" :y="288.500 + (n - 1) * 65.300" class="num">{{ 41 - n }}</text>
          <g v-for="(g, k) in rtBars" :key="k">
            <rect v-for="(x, i) in g.x" :key="i" :x="1318 + x[0] / 3" :y="280 + g.y[0] / 3" :width="(x[1] - x[0]) / 3" :height="(g.y[1] - g.y[0]) / 3" :fill="palette[i]" shape-rendering="crispEdges" />
            <path v-for="(x, i) in g.x" :key="'w' + i" :d="whisker(g, i)" class="axis" />
          </g>
          <path d="M1389.500 359.500h63v173h-63" class="axis" />
          <text transform="translate(1424 737) rotate(-90)" class="side" textLength="113" lengthAdjust="spacingAndGlyphs">BSA_Frag...15-04-02</text>
          <text transform="translate(1487 786.500) rotate(-90)" class="side" textLength="161" lengthAdjust="spacingAndGlyphs">Yeast_0pt1ug_BSA...15-04-01</text>
          <text transform="translate(1346 479) rotate(-90)" textLength="64" class="axis-title">保留时间</text>
          <text x="1419" y="810" textLength="65" class="axis-title">重复测定</text>
        </svg>
      </section>
    </main>

    <footer class="status">
      <span v-fit="49" class="fit">准备完成</span>
      <div class="counts"><span v-for="s in counts" :key="s.t" v-fit="s.w" class="fit">{{ s.t }}</span></div>
      <svg width="13" height="13" class="grip"><path d="M9 1h2v2H9zM9 5h2v2H9zM9 9h2v2H9zM5 5h2v2H5zM5 9h2v2H5zM1 9h2v2H1z" fill="#ababab" /></svg>
    </footer>
  </div>
</template>

<style>
body { overflow: hidden; background: #f0f0f0; }
</style>

<style scoped>
.window { box-sizing: border-box; width: 1533px; height: 848px; border: 1px solid #6e6e6e; display: flex; flex-direction: column; background: #f0f0f0; color: #000; font: 12px/16px "Open Sans", "Noto Sans CJK SC", sans-serif; overflow: hidden; }
.fit { display: inline-block; white-space: nowrap; transform-origin: 0 50%; flex: none; }
svg { display: block; flex: none; }
.titlebar { height: 30px; flex: none; background: #fff; display: flex; align-items: center; }
.logo { margin: 0 4px 0 8px; }
.caption { margin-left: auto; margin-right: 2px; }
.menubar { height: 24px; flex: none; display: flex; align-items: center; padding: 1px 0 0 15px; box-sizing: border-box; background: linear-gradient(90deg, #f0f0f0, #f4f4f4 60%, #fafafa); }
.menu { display: flex; }
.toolbar { height: 24px; flex: none; display: flex; justify-content: space-between; background: linear-gradient(#fdfdfd, #f1f1f1); }
.tools { margin-left: -1px; }
.dock { height: 745px; flex: none; margin-top: 1px; display: flex; border-bottom: 1px solid #d7d7d7; box-sizing: border-box; background: #f5f5f5; }
.panel { box-sizing: border-box; border: 1px solid #a0a0a0; border-bottom: 0; background: #fff; display: flex; flex-direction: column; overflow: hidden; }
.head { height: 17px; flex: none; display: flex; align-items: center; justify-content: space-between; padding: 0 6px 0 5px; background: #bfbfbf; }
.pin { margin-top: -1px; }
.head.active { background: linear-gradient(#b0c8e5, #99b4d1); }
.targets { width: 305px; border-left: 0; background: #f0f0f0; }
.replicate { height: 25px; flex: none; display: flex; align-items: center; padding-left: 3px; background: linear-gradient(90deg, #f7f7f7, #f0f0f0); }
.combo { width: 221px; height: 21px; margin-left: 7px; background: #fff; display: flex; align-items: center; padding-left: 3px; box-sizing: border-box; }
.combo svg { margin-left: 10px; }
.tree-area { height: 686px; flex: none; display: flex; background: #fff; }
.tree { width: 288px; margin-left: -1px; padding-left: 1px; box-sizing: border-box; overflow: hidden; }
.row { height: 16px; display: flex; margin-left: -1px; font: 12px/16px "Liberation Sans", "Noto Sans CJK SC", sans-serif; }
.label { flex: none; height: 16px; padding-left: 2px; box-sizing: border-box; white-space: nowrap; }
.latin { display: inline-block; height: 16px; transform: scaleX(.89); transform-origin: 0 50%; }
.latin.l0 { transform: scaleX(.88); }
.latin.l1 { transform: scaleX(.898); }
.latin b { text-decoration: underline; }
.selected { width: 181px; background: #0078d7; color: #fff; outline: 1px dotted #d98a3a; outline-offset: -1px; }
.missed { margin-left: -2px; font-size: 13px; line-height: 1; }
.tiny { font: bold 7px "Liberation Sans", sans-serif; fill: #fff; }
.vbar { width: 16px; margin-left: 1px; background: #f0f0f0; display: flex; flex-direction: column; }
.vbar i { height: 370px; background: #cdcdcd; margin-bottom: auto; }
.hbar { height: 16px; flex: none; display: flex; background: #f0f0f0; }
.hbar i { width: 214px; background: #cdcdcd; margin-right: 40px; }
.vbar path, .hbar path { fill: none; stroke: #505050; stroke-width: 1.800; }
.docpane { box-sizing: border-box; width: 397px; margin-left: 4px; border: 1px solid #a0a0a0; border-width: 1px 0 0 1px; background: linear-gradient(90deg, #fff 392px, #f0f0f0 392px); }
.docpane.second { width: 394px; margin-left: -1px; border-right-width: 1px; background: #fff; }
.tabs { height: 24px; display: flex; background: #f0f0f0; }
.tab { height: 24px; box-sizing: border-box; border-right: 1px solid #9c9c9c; padding: 6px 6px 0 0; background: linear-gradient(#f0f0f0 4px, #9c9c9c 4px, #9c9c9c 5px, #fff 5px); }
.tab.bold { font-weight: bold; margin-left: -2px; }
.docpane.second .tab { padding-left: 8px; padding-right: 17px; }
.tabfill { flex: 1; border-bottom: 1px solid #9c9c9c; display: flex; justify-content: flex-end; padding-right: 7px; }
.docpane.second .tabfill { padding-right: 3px; }
.areas { width: 214px; margin-left: 4px; }
.times { width: 210px; margin-left: 4px; border-right: 0; }
.axis { fill: none; stroke: #000; shape-rendering: crispEdges; }
.bound { fill: none; stroke: #000; stroke-dasharray: 3 1; shape-rendering: crispEdges; }
.bound.faint { stroke: #d3d3d3; stroke-dasharray: 3 2; }
.curve { fill: none; stroke-width: 5.700; stroke-linejoin: round; }
.num { font: 14px "Liberation Sans", sans-serif; text-anchor: middle; }
.note { font: 12px "Liberation Sans", sans-serif; text-anchor: middle; }
.unit { font: bold 14px "Liberation Sans", "Noto Sans CJK SC", sans-serif; }
.axis-title { font: bold 16px "Noto Sans CJK SC", sans-serif; }
.mini { font: 7.500px "Liberation Sans", "Noto Sans CJK SC", sans-serif; stroke: #000; stroke-width: .2px; }
.side { font: 11px "Liberation Sans", sans-serif; }
.key { font-family: "Liberation Sans", "Noto Sans CJK SC", sans-serif; }
.status { flex: 1; display: flex; align-items: center; padding: 2px 0 0 3px; }
.counts { margin-left: auto; display: flex; gap: 7px; }
.grip { margin-left: 5px; align-self: flex-end; }
</style>
